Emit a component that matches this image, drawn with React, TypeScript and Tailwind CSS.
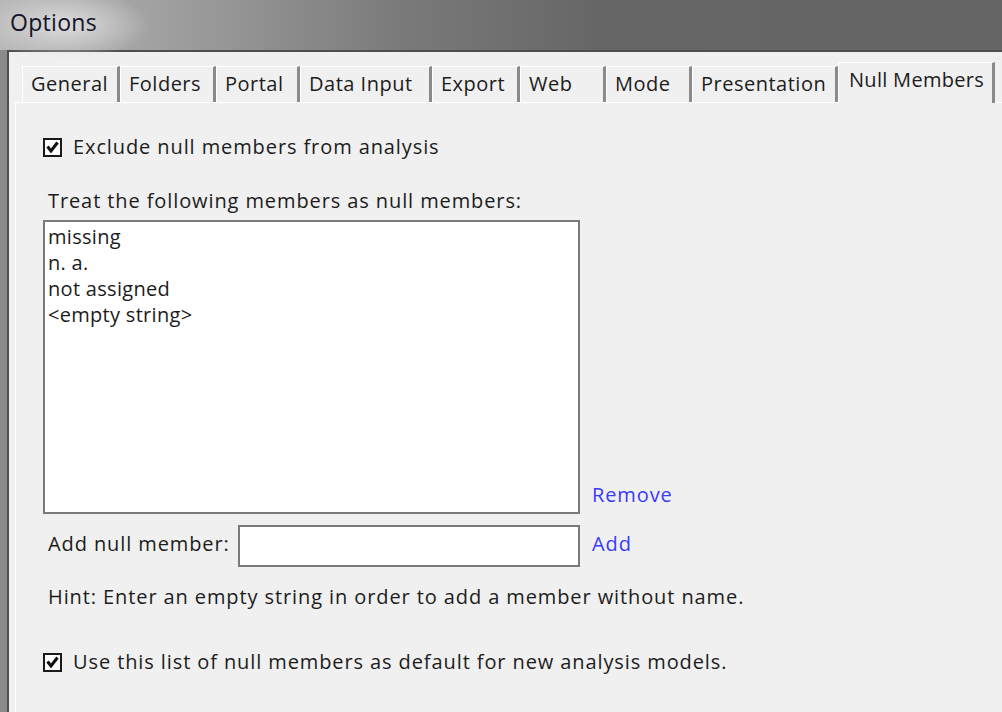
import React from "react";

const font = { fontFamily: '"Open Sans", "Noto Sans", sans-serif' };

const tabs = [
  { label: "General", w: "w-[98px]" },
  { label: "Folders", w: "w-[96px]" },
  { label: "Portal", w: "w-[84px]" },
  { label: "Data Input", w: "w-[132px]" },
  { label: "Export", w: "w-[88px]" },
  { label: "Web", w: "w-[86px]" },
  { label: "Mode", w: "w-[86px]" },
  { label: "Presentation", w: "w-[146px]" },
];

const Check = () => (
  <div className="w-[19px] h-[19px] border-2 border-[#1a1a1a] bg-white flex items-center justify-center shrink-0">
    <svg width="13" height="12" viewBox="0 0 13 12">
      <path d="M1.5 5.5 L5 10 L11.5 1.5" fill="none" stroke="#111" strokeWidth="3" strokeLinejoin="miter" />
    </svg>
  </div>
);

const App = () => {
  return (
    <div className="w-[1002px] h-[712px] overflow-hidden flex flex-col text-[#1c1c1c]" style={font}>
      <div className="h-[50px] shrink-0 relative bg-[linear-gradient(90deg,#b8b8b8_0%,#9a9a9a_20%,#7a7a7a_40%,#666666_60%,#646464_100%)]">
        <div className="absolute left-[-20px] top-[-10px] w-[170px] h-[70px] rounded-full bg-[radial-gradient(closest-side,#dcdcdc,rgba(220,220,220,0))]" />
        <div className="relative pl-[10px] pt-[6px] text-[23px] leading-[32px] tracking-[0.3px] text-[#141428]">Options</div>
      </div>
      <div className="flex-1 flex min-h-0">
        <div className="w-[7px] bg-[#8a8a8a] shrink-0" />
        <div className="flex-1 border-l-2 border-t-2 border-[#4e4e4e] bg-[#f0f0f0] flex flex-col pl-[6px] pr-[7px]">
          <div className="h-[50px] flex items-end pl-[2px] pr-[10px] relative z-10">
            <div className="flex items-end pl-[5px]">
              {tabs.map(t => (
                <div
                  key={t.label}
                  className={`${t.w} h-[36px] border-t border-l border-white border-r-[3px] border-r-[#8a8a8a] bg-[#f0f0f0] pl-[8px] text-[20px] leading-[34px] tracking-[0.5px] whitespace-nowrap`}
                >
                  {t.label}
                </div>
              ))}
              <div className="w-[157px] h-[41px] border-t border-l border-white border-r-[3px] border-r-[#8a8a8a] bg-[#f0f0f0] pl-[10px] text-[20px] leading-[34px] tracking-[0.3px] whitespace-nowrap -mb-[1px]">
                Null Members
              </div>
            </div>
          </div>
          <div className="flex-1 border-t border-l border-white pl-[27px] pt-[34px] text-[20px] tracking-[0.9px]">
            <div className="flex items-center gap-[11px] h-[20px]">
              <Check />
              <span>Exclude null members from analysis</span>
            </div>
            <div className="mt-[31px] pl-[5px] leading-[26px]">Treat the following members as null members:</div>
            <div className="mt-[6px] flex items-end">
              <div className="w-[537px] h-[294px] border-2 border-[#7a7a7a] bg-white pl-[3px] pt-[2px] leading-[26px] tracking-[0.3px]">
                <div>missing</div>
                <div>n. a.</div>
                <div>not assigned</div>
                <div>&lt;empty string&gt;</div>
              </div>
              <span className="ml-[12px] mb-[6px] leading-[26px] text-[#3a3aff]">Remove</span>
            </div>
            <div className="mt-[11px] flex items-center h-[42px]">
              <span className="pl-[5px] w-[195px] leading-[26px] -mt-[5px]">Add null member:</span>
              <div className="w-[342px] h-[42px] border-2 border-[#7a7a7a] bg-white" />
              <span className="ml-[12px] leading-[26px] text-[#3a3aff] -mt-[5px]">Add</span>
            </div>
            <div className="mt-[17px] pl-[5px] leading-[26px]">
              Hint: Enter an empty string in order to add a member without name.
            </div>
            <div className="mt-[42px] flex items-center gap-[11px] h-[20px]">
              <Check />
              <span>Use this list of null members as default for new analysis models.</span>
            </div>
          </div>
        </div>
      </div>
    </div>
  );
};

export default App;
